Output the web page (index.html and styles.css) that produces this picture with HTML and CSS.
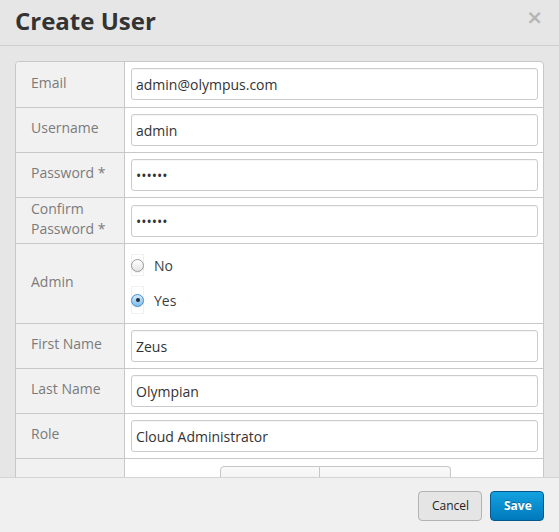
FILE: index.html
```html
<!DOCTYPE html>
<html>
<head>
<meta charset="utf-8">
<link rel="stylesheet" href="styles.css">
</head>
<body>
<div class="modal">
  <div class="modal-header">
    <h3 class="modal-title">Create User</h3>
    <span class="close">&times;</span>
  </div>
  <div class="modal-body">
    <div class="form-table">
      <div class="row row-first">
        <div class="label">Email</div>
        <div class="value"><input class="field" type="text" value="admin@olympus.com"></div>
      </div>
      <div class="row">
        <div class="label">Username</div>
        <div class="value"><input class="field" type="text" value="admin"></div>
      </div>
      <div class="row">
        <div class="label">Password *</div>
        <div class="value"><input class="field" type="password" value="zeus01"></div>
      </div>
      <div class="row row-tall">
        <div class="label">Confirm<br>Password *</div>
        <div class="value"><input class="field" type="password" value="zeus01"></div>
      </div>
      <div class="row">
        <div class="label">Admin</div>
        <div class="value radios">
          <label class="radio-line"><span class="radio-box"><span class="radio"></span></span><span class="radio-text">No</span></label>
          <label class="radio-line"><span class="radio-box radio-box-tall"><span class="radio radio-checked"></span></span><span class="radio-text">Yes</span></label>
        </div>
      </div>
      <div class="row">
        <div class="label">First Name</div>
        <div class="value"><input class="field" type="text" value="Zeus"></div>
      </div>
      <div class="row">
        <div class="label">Last Name</div>
        <div class="value"><input class="field" type="text" value="Olympian"></div>
      </div>
      <div class="row">
        <div class="label">Role</div>
        <div class="value"><input class="field" type="text" value="Cloud Administrator"></div>
      </div>
      <div class="row">
        <div class="label label-empty"></div>
        <div class="value segmented-cell">
          <div class="segmented">
            <span class="seg seg-left"></span>
            <span class="seg seg-right"></span>
          </div>
        </div>
      </div>
    </div>
  </div>
  <div class="modal-footer">
    <button class="btn btn-default">Cancel</button>
    <button class="btn btn-primary">Save</button>
  </div>
</div>
</body>
</html>
```

FILE: styles.css
```css
* { box-sizing: border-box; }

html, body {
  margin: 0;
  padding: 0;
  background: #e6e6e6;
  font-family: "Open Sans", "DejaVu Sans", sans-serif;
}

.modal {
  width: 559px;
  height: 532px;
  display: flex;
  flex-direction: column;
  background: #e6e6e6;
  overflow: hidden;
}

.modal-header {
  flex: 0 0 46px;
  display: flex;
  align-items: flex-start;
  justify-content: space-between;
  padding: 4px 16px 0 15px;
  border-bottom: 1px solid #cfcfcf;
  background: #e6e6e6;
}

.modal-title {
  margin: 0;
  font-size: 24px;
  line-height: 34px;
  font-weight: 700;
  color: #333333;
}

.close {
  font-size: 20px;
  line-height: 26px;
  font-weight: 700;
  color: #b5b5b5;
  font-family: "DejaVu Sans", sans-serif;
  margin-top: 0;
}

.modal-body {
  flex: 1 1 auto;
  overflow: hidden;
  padding: 15px 15px 0 15px;
  background: #e6e6e6;
}

.form-table {
  background: #ffffff;
  border: 1px solid #c8c8c8;
  border-radius: 4px;
}

.row {
  display: flex;
  border-top: 1px solid #c8c8c8;
}

.row-first {
  border-top: none;
}

.label {
  flex: 0 0 109px;
  display: flex;
  align-items: center;
  padding: 0 8px 4px 15px;
  background: #f1f1f1;
  border-right: 1px solid #c8c8c8;
  font-size: 14px;
  line-height: 20px;
  color: #7b7b7b;
}

.row-first .label {
  border-top-left-radius: 4px;
}

.value {
  flex: 1 1 auto;
  padding: 6px 5px 6px 6px;
}

.row-first .value {
  padding-bottom: 7px;
}

.row-tall .value {
  padding-top: 7px;
}

.field {
  display: block;
  width: 100%;
  height: 32px;
  margin: 0;
  padding: 0 4px;
  border: 1px solid #cccccc;
  border-radius: 3px;
  background: #ffffff;
  box-shadow: inset 0 1px 1px rgba(0, 0, 0, 0.04);
  font-family: "Open Sans", "DejaVu Sans", sans-serif;
  font-size: 14px;
  color: #333333;
  outline: none;
}

.radios {
  display: flex;
  flex-direction: column;
  gap: 5px;
  padding-bottom: 8px;
}

.radio-line {
  display: flex;
  align-items: center;
  height: 30px;
}

.radio-box {
  width: 13px;
  height: 22px;
  display: flex;
  align-items: center;
  justify-content: center;
  border: 1px solid #f0f0f0;
  margin-right: 10px;
}

.radio-box-tall {
  height: 28px;
}

.radio {
  flex: 0 0 13px;
  width: 13px;
  height: 13px;
  border-radius: 50%;
  border: 1px solid #9a9a9a;
  background: linear-gradient(#ffffff, #e4e4e4);
  box-shadow: 0 1px 1px rgba(0, 0, 0, 0.08);
  position: relative;
}

.radio-checked {
  border-color: #4a8cc8;
  background: linear-gradient(#d3ebfb, #7fbef0);
}

.radio-checked::after {
  content: "";
  position: absolute;
  left: 3.5px;
  top: 3.5px;
  width: 4px;
  height: 4px;
  border-radius: 50%;
  background: #1c2b3a;
}

.radio-text {
  font-size: 14px;
  color: #3a3f45;
}

.segmented-cell {
  display: flex;
  justify-content: center;
  padding-top: 7px;
  padding-bottom: 10px;
}

.segmented {
  display: flex;
  margin-left: 1px;
}

.seg {
  height: 30px;
  border: 1px solid #c6c6c6;
  background: linear-gradient(#fafafa, #e9e9e9);
}

.seg-left {
  width: 100px;
  border-radius: 4px 0 0 4px;
}

.seg-right {
  width: 131px;
  border-left: none;
  border-radius: 0 4px 4px 0;
}

.modal-footer {
  flex: 0 0 55px;
  display: flex;
  justify-content: flex-end;
  align-items: flex-start;
  gap: 8px;
  padding: 13px 15px 0 15px;
  border-top: 1px solid #d4d4d4;
  background: #f0f0f0;
}

.btn {
  height: 30px;
  margin: 0;
  padding: 0 13px;
  border-radius: 4px;
  font-family: "Open Sans", "DejaVu Sans", sans-serif;
  font-size: 12px;
  line-height: 28px;
  cursor: pointer;
}

.btn-default {
  width: 64px;
  border: 1px solid #b3b3b3;
  background: #e5e5e5;
  color: #222222;
}

.btn-primary {
  width: 54px;
  border: 1px solid #05588a;
  background: linear-gradient(#13a2e0, #0079bd);
  color: #ffffff;
  font-weight: 700;
  text-shadow: 0 -1px 0 rgba(0, 0, 0, 0.3);
}
```
